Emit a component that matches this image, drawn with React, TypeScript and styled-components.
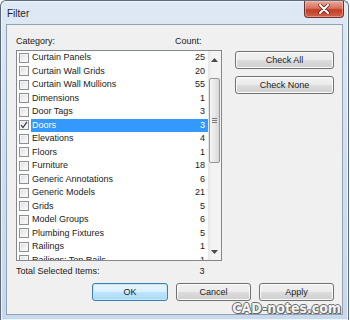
import React from 'react';
import styled, { createGlobalStyle, css } from 'styled-components';

const GlobalStyle = createGlobalStyle`
  html, body {
    margin: 0;
    padding: 0;
    background: #ffffff;
  }
  body {
    font-family: "Liberation Sans", Arial, sans-serif;
    font-size: 9px;
    color: #1a1a1a;
  }
`;

const categories = [
  { name: 'Curtain Panels', count: 25 },
  { name: 'Curtain Wall Grids', count: 20 },
  { name: 'Curtain Wall Mullions', count: 55 },
  { name: 'Dimensions', count: 1 },
  { name: 'Door Tags', count: 3 },
  { name: 'Doors', count: 3, checked: true },
  { name: 'Elevations', count: 4 },
  { name: 'Floors', count: 1 },
  { name: 'Furniture', count: 18 },
  { name: 'Generic Annotations', count: 6 },
  { name: 'Generic Models', count: 21 },
  { name: 'Grids', count: 5 },
  { name: 'Model Groups', count: 6 },
  { name: 'Plumbing Fixtures', count: 5 },
  { name: 'Railings', count: 1 },
  { name: 'Railings: Top Rails', count: 1 },
];

const App = () => {
  return (
    <>
      <GlobalStyle />
      <Window>
        <TitleBar>
          <Title>Filter</Title>
          <CloseButton>
            <svg width="12" height="10" viewBox="0 0 12 10">
              <path d="M2 1 L10 9 M10 1 L2 9" stroke="#5a2018" strokeWidth="3.4" strokeLinecap="round" />
              <path d="M2 1 L10 9 M10 1 L2 9" stroke="#ffffff" strokeWidth="2" strokeLinecap="round" />
            </svg>
          </CloseButton>
        </TitleBar>
        <Client>
          <Body>
            <LeftColumn>
              <Header>
                <span>Category:</span>
                <CountLabel>Count:</CountLabel>
              </Header>
              <ListBox>
                <Items>
                  {categories.map((c) => (
                    <Row key={c.name}>
                      <CheckBox>
                        {c.checked && (
                          <svg width="8" height="8" viewBox="0 0 8 8">
                            <path d="M1 4.2 L3 6.6 L7 0.8" fill="none" stroke="#2a3a5a" strokeWidth="1.2" />
                          </svg>
                        )}
                      </CheckBox>
                      <Label selected={!!c.checked}>
                        <span>{c.name}</span>
                        <span>{c.count}</span>
                      </Label>
                    </Row>
                  ))}
                </Items>
                <ScrollBar>
                  <ArrowButton>
                    <svg width="7" height="4" viewBox="0 0 7 4">
                      <path d="M0 4 L3.5 0 L7 4 Z" fill="#4a4a4a" />
                    </svg>
                  </ArrowButton>
                  <Track>
                    <Thumb>
                      <Grip />
                      <Grip />
                      <Grip />
                    </Thumb>
                  </Track>
                  <ArrowButton>
                    <svg width="7" height="4" viewBox="0 0 7 4">
                      <path d="M0 0 L7 0 L3.5 4 Z" fill="#4a4a4a" />
                    </svg>
                  </ArrowButton>
                </ScrollBar>
              </ListBox>
              <TotalRow>
                <span>Total Selected Items:</span>
                <TotalValue>3</TotalValue>
              </TotalRow>
            </LeftColumn>
            <RightColumn>
              <Button>Check All</Button>
              <Button>Check None</Button>
            </RightColumn>
          </Body>
          <Footer>
            <Button primary width={76}>OK</Button>
            <Button width={75}>Cancel</Button>
            <Button width={75}>Apply</Button>
          </Footer>
          <Watermark>CAD-notes.com</Watermark>
        </Client>
      </Window>
    </>
  );
};

export default App;

const Window = styled.div`
  position: relative;
  width: 349px;
  height: 320px;
  box-sizing: border-box;
  padding: 0 5px 5px 5px;
  border: 1px solid #5d6b7a;
  border-bottom: none;
  border-radius: 6px 6px 0 0;
  background: linear-gradient(to bottom, #dfe9f5 0%, #d2e0ef 40%, #c8d9ec 100%);
  box-shadow: inset 0 0 0 1px #eef4fb;
  display: flex;
  flex-direction: column;
`;

const TitleBar = styled.div`
  height: 23px;
  display: flex;
  align-items: flex-start;
  justify-content: space-between;
`;

const Title = styled.div`
  font-size: 10px;
  color: #1e1e1e;
  margin-top: 7px;
  margin-left: 1px;
  line-height: 12px;
`;

const CloseButton = styled.div`
  width: 40px;
  height: 17px;
  margin-right: -1px;
  box-sizing: border-box;
  border: 1px solid #6e3028;
  border-top: none;
  border-radius: 0 0 4px 4px;
  background: linear-gradient(to bottom, #e9a99b 0%, #d7715d 45%, #c13d24 55%, #d0604a 100%);
  box-shadow: inset 0 0 0 1px rgba(255, 210, 200, 0.45);
  display: flex;
  align-items: center;
  justify-content: center;
`;

const Client = styled.div`
  position: relative;
  flex: 1;
  background: #f0f0f0;
  border: 1px solid #8fa1b5;
  padding: 9px 7px 0 9px;
  display: flex;
  flex-direction: column;
`;

const Body = styled.div`
  display: flex;
  gap: 13px;
`;

const LeftColumn = styled.div`
  width: 206px;
  display: flex;
  flex-direction: column;
`;

const Header = styled.div`
  height: 16px;
  line-height: 14px;
  position: relative;
`;

const CountLabel = styled.span`
  margin-left: 120px;
`;

const ListBox = styled.div`
  height: 211px;
  box-sizing: border-box;
  border: 1px solid #828790;
  background: #ffffff;
  display: flex;
`;

const Items = styled.div`
  flex: 1;
  overflow: hidden;
`;

const Row = styled.div`
  height: 13.5px;
  display: flex;
  align-items: center;
`;

const CheckBox = styled.div`
  width: 10px;
  height: 10px;
  margin: 0 2px 0 2px;
  box-sizing: border-box;
  border: 1px solid #8e8f8f;
  background: linear-gradient(135deg, #dcdcdc 0%, #f2f2f2 60%, #ffffff 100%);
  box-shadow: inset 0 0 0 1px #f4f4f4;
  display: flex;
  align-items: center;
  justify-content: center;
`;

const Label = styled.div<{ selected: boolean }>`
  flex: 1;
  height: 13.5px;
  line-height: 13.5px;
  display: flex;
  justify-content: space-between;
  padding: 0 3px 0 1px;
  color: #1a1a1a;

  ${({ selected }) =>
    selected &&
    css`
      background: #3399ff;
      color: #ffffff;
    `}
`;

const ScrollBar = styled.div`
  width: 13px;
  display: flex;
  flex-direction: column;
  background: linear-gradient(to right, #e6e6e6 0%, #f3f3f3 30%, #f3f3f3 100%);
`;

const ArrowButton = styled.div`
  height: 17px;
  display: flex;
  align-items: center;
  justify-content: center;
`;

const Track = styled.div`
  flex: 1;
  padding-top: 10px;
`;

const Thumb = styled.div`
  width: 11px;
  height: 85px;
  margin-left: 1px;
  box-sizing: border-box;
  border: 1px solid #989898;
  border-radius: 2px;
  background: linear-gradient(to right, #f4f4f4 0%, #e8e8e8 50%, #d6d6d6 100%);
  display: flex;
  flex-direction: column;
  align-items: center;
  justify-content: center;
  gap: 1px;
`;

const Grip = styled.div`
  width: 5px;
  height: 1px;
  background: #7a7a7a;
`;

const TotalRow = styled.div`
  margin-top: 3px;
  line-height: 14px;
  display: flex;
`;

const TotalValue = styled.span`
  margin-left: 100px;
`;

const RightColumn = styled.div`
  width: 99px;
  padding-top: 17px;
  display: flex;
  flex-direction: column;
  gap: 7px;
`;

const Button = styled.div<{ primary?: boolean; width?: number }>`
  width: ${({ width }) => (width ? `${width}px` : '100%')};
  height: 18px;
  box-sizing: border-box;
  border: 1px solid #707070;
  border-radius: 3px;
  background: linear-gradient(to bottom, #f2f2f2 0%, #ebebeb 50%, #dddddd 51%, #cfcfcf 100%);
  box-shadow: inset 0 0 0 1px #fbfbfb;
  display: flex;
  align-items: center;
  justify-content: center;
  color: #1a1a1a;
  font-size: 9px;

  ${({ primary }) =>
    primary &&
    css`
      border-color: #3c7fb1;
      background: linear-gradient(to bottom, #eaf6fd 0%, #d9f0fc 50%, #bee6fd 51%, #a7d9f5 100%);
      box-shadow: inset 0 0 0 1px #c6e6f8;
    `}
`;

const Footer = styled.div`
  margin-top: 5px;
  display: flex;
  justify-content: flex-end;
  gap: 8px;
  padding-right: 1px;
`;

const Watermark = styled.div`
  position: absolute;
  right: 1px;
  bottom: -2px;
  font-family: "DejaVu Sans Condensed", "DejaVu Sans", sans-serif;
  font-weight: bold;
  font-size: 14px;
  color: #f4f4f4;
  text-shadow: 1px 0 0 #6a6a6a, -1px 0 0 #6a6a6a, 0 1px 0 #6a6a6a, 0 -1px 0 #6a6a6a, 1px 1px 0 #555;
`;
